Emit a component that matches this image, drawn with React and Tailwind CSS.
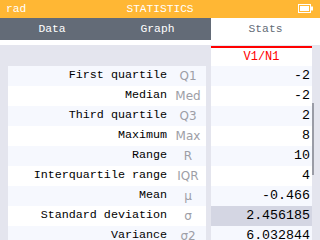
const rows = [
  { title: 'First quartile', sym: 'Q1', value: '-2' },
  { title: 'Median', sym: 'Med', value: '-2' },
  { title: 'Third quartile', sym: 'Q3', value: '2' },
  { title: 'Maximum', sym: 'Max', value: '8' },
  { title: 'Range', sym: 'R', value: '10' },
  { title: 'Interquartile range', sym: 'IQR', value: '4' },
  { title: 'Mean', sym: 'μ', value: '-0.466' },
  { title: 'Standard deviation', sym: 'σ', value: '2.456185', selected: true },
  { title: 'Variance', sym: 'σ2', value: '6.032844' },
];

function Battery() {
  return (
    <svg width="16" height="10" viewBox="0 0 16 10">
      <rect x="0.5" y="0.5" width="12" height="8" fill="none" stroke="#fff" />
      <rect x="2" y="2" width="9" height="5" fill="#fff" />
      <rect x="13" y="2.5" width="2" height="4" fill="#fff" />
    </svg>
  );
}

export default function App() {
  return (
    <div className="w-[320px] h-[240px] overflow-hidden bg-[#e4e5ee] font-['Liberation_Mono',monospace]">
      <div className="h-[18px] bg-[#ffb734] grid grid-cols-[1fr_auto_1fr] items-center px-[6px] text-white text-[11.2px]">
        <span>rad</span>
        <span>STATISTICS</span>
        <span className="flex justify-end"><Battery /></span>
      </div>
      <div className="h-[22px] grid grid-cols-[104px_107px_109px] bg-[#636b77] text-[11.3px]">
        <div className="flex items-center justify-center text-white">Data</div>
        <div className="flex items-center justify-center text-white">Graph</div>
        <div className="flex items-center justify-center bg-white text-[#636b77]">Stats</div>
      </div>
      <div className="h-[5px] bg-white" />
      <div className="flex pl-[8px]">
        <div className="w-[198px] mt-[21px]">
          {rows.map((r, i) => (
            <div key={r.title} className={`h-[20px] flex items-center ${i % 2 === 0 ? 'bg-[#f6f8fe]' : 'bg-white'}`}>
              <div className="w-[162px] pr-[3px] text-right text-[11.7px] text-black">{r.title}</div>
              <div className="w-[36px] text-center text-[12px] text-[#9d9ea6] font-['DejaVu_Sans',sans-serif]">{r.sym}</div>
            </div>
          ))}
        </div>
        <div className="w-[101px] ml-[5px] mt-[1px]">
          <div className="h-[20px] bg-white border-t-2 border-[#ff0000] flex items-center justify-center text-[#ff0000] text-[12px]">V1/N1</div>
          {rows.map((r, i) => (
            <div key={r.title} className={`h-[20px] flex items-center justify-end pr-[2px] text-[13.3px] text-black ${r.selected ? 'bg-[#d4d6e3]' : i % 2 === 0 ? 'bg-[#f6f8fe]' : 'bg-white'}`}>
              {r.value}
            </div>
          ))}
        </div>
        <div className="w-[2px] mt-[58px] h-[72px] bg-[#9a9ca6]" />
      </div>
    </div>
  );
}
